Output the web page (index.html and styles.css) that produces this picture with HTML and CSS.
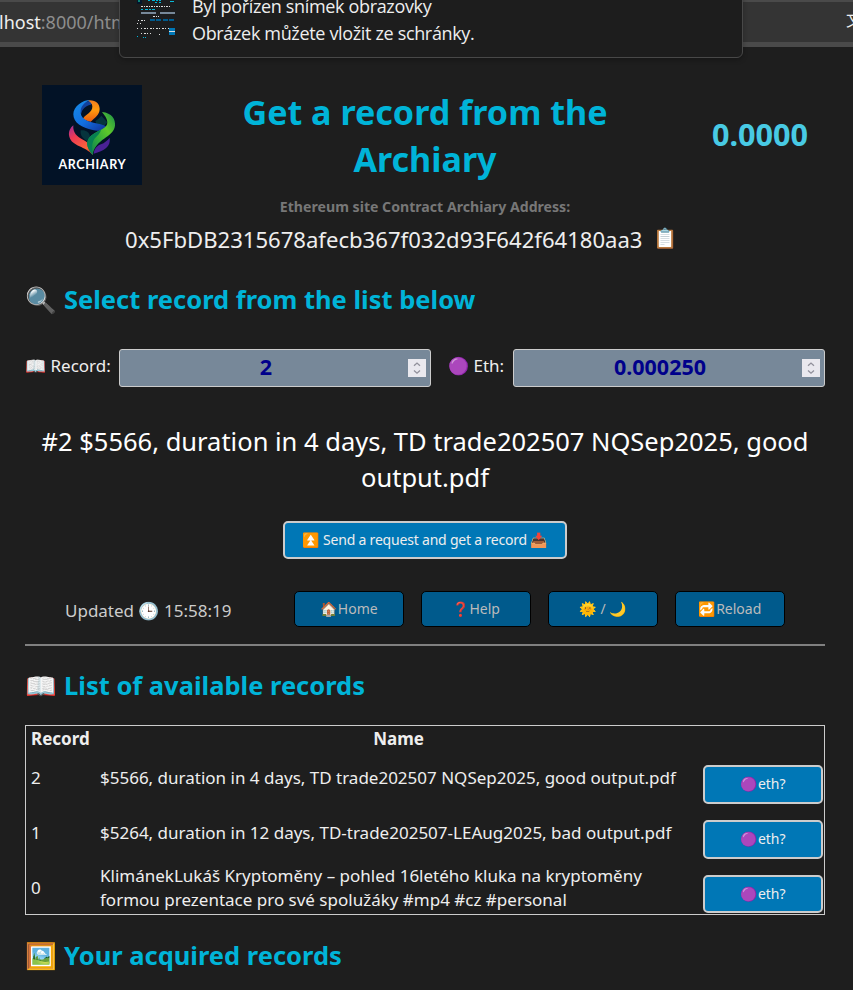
FILE: index.html
```
<!DOCTYPE html>
<html lang="en">
<head>
<meta charset="utf-8">
<title>Archiary</title>
<link rel="stylesheet" href="styles.css">
</head>
<body>
<div class="toolbar"><div class="urlbar"><span class="url"><b>lhost</b>:8000/html</span><span class="translate">文</span></div></div>
<div class="toast">
  <svg class="thumb" viewBox="0 0 40 42" shape-rendering="crispEdges">
    <rect width="40" height="42" fill="#1c1d1e"/>
    <rect width="5" height="4" fill="#04162b"/><rect x="1" width="2" height="2" fill="#0b8072"/>
    <g stroke-width="1" fill="none">
      <path stroke="#00b4d8" stroke-dasharray="2 1.5 3 1" d="M11 .5h13M18 2.500h6M4 9.500h14"/>
      <path stroke="#08b9d8" d="M33 1.500h4"/>
      <path stroke="#ddd" stroke-dasharray="2 1 1 1" d="M4 6.500h30M16 16.500h6"/>
      <path stroke="#778899" stroke-width="2" d="M4 13h15M23 13h15"/>
      <path stroke="#005a8c" stroke-width="2" d="M13 20h5M19 20h5M26 20h5M32 20h5"/>
      <path stroke="#ddd" stroke-dasharray="1 2 2 1" d="M1 20.500h8M0 23.500h4M0 28.500h2M4 28.500h28M4 33.500h10M22 34.500h1"/>
      <path stroke="#0077b6" stroke-width="3" d="M32 29.500h6M32 33.500h6"/>
      <path stroke="#ddd" d="M32 31.500h6"/>
      <path stroke="#00b4d8" stroke-dasharray="1 1" d="M0 36.500h2M6 37.500h3"/>
    </g>
  </svg>
  <div class="toast-text"><p class="t1">Byl pořízen snímek obrazovky</p><p class="t2">Obrázek můžete vložit ze schránky.</p></div>
</div>
<main>
  <header>
    <svg class="logo" viewBox="0 0 100 100">
      <defs>
        <linearGradient id="blue" gradientUnits="userSpaceOnUse" x1="50" y1="25" x2="125" y2="112"><stop offset="0" stop-color="#1687e6"/><stop offset=".5" stop-color="#126fe0"/><stop offset="1" stop-color="#12369c"/></linearGradient>
        <linearGradient id="orange" x1="0" y1="0" x2="0" y2="1"><stop offset="0" stop-color="#f07c20"/><stop offset=".45" stop-color="#ff9b0e"/><stop offset="1" stop-color="#e8590f"/></linearGradient>
        <linearGradient id="green" x1="1" y1="0" x2="0" y2="1"><stop offset="0" stop-color="#168c4b"/><stop offset=".35" stop-color="#5fc92a"/><stop offset=".65" stop-color="#2da73d"/><stop offset="1" stop-color="#097653"/></linearGradient>
        <linearGradient id="red" gradientUnits="userSpaceOnUse" x1="28" y1="98" x2="92" y2="186"><stop offset="0" stop-color="#a52f91"/><stop offset=".3" stop-color="#ee3a54"/><stop offset=".75" stop-color="#fb6738"/><stop offset="1" stop-color="#c92824"/></linearGradient>
      </defs>
      <rect width="100" height="100" fill="#021226"/>
      <g transform="translate(20 8) scale(.3333)">
        <path fill="#06343d" d="M100 84c8-4 14-12 18-16l18 20c-8 12-18 14-28 16z"/>
        <path fill="#06343d" d="M56 112c14-2 27 4 28 20l-10 12c-12-8-20-16-18-32z"/>
        <path fill="#4a2295" d="M143 134c4 28-16 38-48 48 2-16 10-24 22-28 10-4 20-12 26-20z"/>
        <path fill="#12419b" d="M84 24c10 4 8 9 2 11-16 4-26 13-28 27l-10-12c6-16 18-24 36-26z"/>
        <path fill="url(#orange)" d="M76 22c24-3 37 8 37 26 0 18-16 28-27 38-10-2-17-4-23-9 7-13 29-18 28-37 0-8-7-14-15-18z"/>
        <path fill="url(#blue)" d="M84 21c-18 7-30 21-28 39 2 20 26 27 46 31 17 3 26 6 34 12-14 12-30 12-44 8C60 104 34 90 34 64c0-24 28-43 50-43z"/>
        <path fill="url(#red)" d="M34 97c-9 7-16 20-12 34 8 30 50 28 70 55 0-28-14-38-29-46-18-9-31-20-29-43z"/>
        <path fill="url(#green)" d="M120 57c30 3 41 22 39 41-4 36-60 38-67 88-20-25-22-42-5-58 21-18 51-20 49-41-1-12-8-20-16-30z"/>
        <path fill="#078052" d="M92 186c-20-25-22-42-5-58 10-8 21-13 30-18-4 17-19 21-24 36-4 10-3 24-1 40z"/>
      </g>
      <text x="50" y="84" text-anchor="middle" textLength="67" class="logo-word">ARCHIARY</text>
    </svg>
    <h1>Get a record from the<br>Archiary</h1>
    <div class="balance">0.0000</div>
  </header>
  <p class="caption">Ethereum site Contract Archiary Address:</p>
  <p class="address"><span>0x5FbDB2315678afecb367f032d93F642f64180aa3</span><i class="emoji">📋</i></p>
  <h2 class="select"><i class="emoji">🔍</i><span>Select record from the list below</span></h2>
  <div class="fields">
    <label class="l1"><i class="emoji">📖</i>Record:</label>
    <div class="field"><span class="v1">2</span><svg class="spin" viewBox="0 0 18 18"><path d="M6 6.700 9 4l3 2.700M6 11.500l3 2.700 3-2.700"/></svg></div>
    <label class="l2"><i class="emoji">🟣</i>Eth:</label>
    <div class="field"><span>0.000250</span><svg class="spin" viewBox="0 0 18 18"><path d="M6 6.700 9 4l3 2.700M6 11.500l3 2.700 3-2.700"/></svg></div>
  </div>
  <p class="message">#2 $5566, duration in 4 days, TD trade202507 NQSep2025, good<br>output.pdf</p>
  <button class="btn send"><i class="emoji">⏫</i><span>Send a request and get a record</span><i class="emoji">📥</i></button>
  <nav>
    <div class="updated">Updated <i class="emoji">🕒</i> <span>15:58:19</span></div>
    <button><i class="emoji">🏠</i><span>Home</span></button>
    <button><i class="emoji">❓</i><span>Help</span></button>
    <button class="theme"><i class="emoji">🌞</i><span>/</span><i class="emoji">🌙</i></button>
    <button><i class="emoji">🔁</i><span>Reload</span></button>
  </nav>
  <h2 class="list"><i class="emoji">📖</i><span>List of available records</span></h2>
  <div class="records">
    <div class="row head"><span>Record</span><span class="name">Name</span></div>
    <div class="row"><span>2</span><span>$5566, duration in 4 days, TD trade202507 NQSep2025, good output.pdf</span><button class="btn"><i class="emoji">🟣</i><span>eth?</span></button></div>
    <div class="row"><span>1</span><span>$5264, duration in 12 days, TD-trade202507-LEAug2025, bad output.pdf</span><button class="btn"><i class="emoji">🟣</i><span>eth?</span></button></div>
    <div class="row last"><span>0</span><span>KlimánekLukáš Kryptoměny – pohled 16letého kluka na kryptoměny<br>formou prezentace pro své spolužáky #mp4 #cz #personal</span><button class="btn"><i class="emoji">🟣</i><span>eth?</span></button></div>
  </div>
  <h2 class="acquired"><i class="emoji">🖼️</i><span>Your acquired records</span></h2>
</main>
</body>
</html>
```
FILE: styles.css
```
* { box-sizing: border-box; margin: 0; padding: 0; }
body { width: 853px; height: 990px; overflow: hidden; background: #1e1e1e; color: #eee; font: 17px/24px "Noto Sans", sans-serif; }
.emoji { font-family: "Noto Color Emoji", sans-serif; font-style: normal; font-weight: 400; letter-spacing: 0; white-space: nowrap; }
.toolbar { height: 47px; background: #4a4a4a; padding: 2px 0 5px; }
.urlbar { height: 40px; background: #343434; display: flex; justify-content: space-between; overflow: hidden; line-height: 41px; font-size: 18px; }
.url { color: #8d8d8d; margin-left: -1px; }
.url b { font-weight: 400; color: #eee; }
.translate { width: 7px; font-family: "Noto Sans CJK SC", sans-serif; font-size: 17px; line-height: 34px; }
.toast { position: absolute; left: 119px; top: -10px; width: 624px; height: 68px; border: 1px solid #484848; border-radius: 6px; background: #1d1d1d; box-shadow: 0 2px 5px #0004; display: flex; padding: 9px 0 0 17px; }
.thumb { width: 40px; height: 42px; margin-right: 15px; }
.toast-text { font: 18px/27px "Open Sans", sans-serif; letter-spacing: -0.34px; margin-top: -7px; white-space: nowrap; }
main { padding: 0 28px 0 25px; }
header { display: flex; height: 150px; padding: 38px 17px 0; align-items: flex-start; }
.logo { width: 100px; height: 100px; }
.logo-word { font: 700 12.500px Lato, sans-serif; fill: #fff; }
h1 { flex: 1; margin-top: 4px; text-align: center; color: #00b4d8; font-size: 34.080px; line-height: 47px; }
.balance { width: 96px; margin-left: 4px; color: #48cae4; font-weight: 700; font-size: 30.600px; line-height: 99px; white-space: nowrap; }
.caption { height: 19px; line-height: 19px; text-align: center; font-size: 14.130px; font-weight: 700; color: #777; }
.address { display: flex; height: 31px; line-height: 31px; margin: 8px 0 0 100px; font-size: 22.100px; }
.address .emoji { margin-left: 11px; font-size: 19.500px; line-height: 30px; }
h2 { display: flex; height: 36px; line-height: 36px; color: #00b4d8; font-size: 25.500px; white-space: nowrap; }
h2 .emoji { width: 39px; font-size: 25.500px; line-height: 38px; }
.select { margin-top: 26px; }
.fields { display: flex; height: 38px; margin-top: 32px; }
.fields label { line-height: 33px; white-space: nowrap; display: flex; }
.fields label .emoji { width: 25.500px; line-height: 35px; }
.l1 { width: 94px; }
.l2 { width: 82px; padding-left: 17px; }
.field { width: 312px; height: 38px; border: 1px solid #ccc; border-radius: 3px; background: #778899; display: flex; align-items: center; padding-right: 4px; color: #00008b; font-size: 21.500px; font-weight: 700; }
.field span { flex: 1; margin-top: -2px; padding-left: 4px; text-align: center; }
.spin { width: 18px; height: 18px; background: #e9e8ee; fill: none; stroke: #91909b; stroke-width: 1.300; }
.message { margin-top: 36px; line-height: 36px; font-size: 25.500px; color: #fff; text-align: center; white-space: nowrap; }
button { font: 14px/20px "Noto Sans", sans-serif; display: flex; align-items: center; justify-content: center; white-space: nowrap; }
.btn { border: 2px solid #ccc; border-radius: 5px; background: #0077b6; color: #eee; }
.send { width: 284px; height: 38px; margin: 26px 0 0 258px; gap: 3px; letter-spacing: -0.2px; }
nav { display: flex; height: 87px; border-bottom: 2px solid #808080; padding: 32px 40px 0; gap: 17px; }
nav button { width: 110px; height: 36px; border: 1px solid #000; border-radius: 5px; background: #005a8c; color: #bbb; }
.theme { gap: 4px; }
.updated { width: 212px; color: #ccc; line-height: 39px; white-space: nowrap; }
.list { margin-top: 21px; }
.records { height: 190px; margin-top: 22px; border: 1px solid #ccc; }
.row { display: grid; grid-template-columns: 69px 603px 120px; height: 55px; padding-left: 5px; align-items: center; white-space: nowrap; }
.row > span { margin-top: -2px; }
.row.head { height: 25px; font-weight: 700; }
.row.head > span { margin-top: 0; }
.row .name { text-align: center; padding-right: 6px; }
.row .btn { height: 39px; margin-top: 12px; padding-bottom: 2px; }
.row.last .btn { height: 38px; margin-top: 11px; padding-bottom: 1px; }
.acquired { margin-top: 22px; }
```
